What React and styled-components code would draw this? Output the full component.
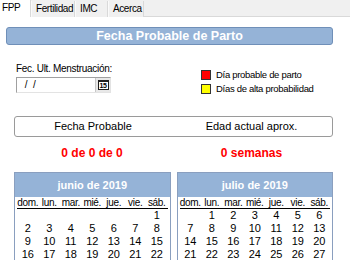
import React from 'react';
import styled, { createGlobalStyle } from 'styled-components';

const GlobalStyle = createGlobalStyle`
  html, body {
    margin: 0;
    padding: 0;
    background: #ffffff;
    font-family: "Liberation Sans", Arial, sans-serif;
    color: #000;
  }
`;

const Page = styled.div`
  width: 350px;
  height: 260px;
  overflow: hidden;
  background: #ffffff;
`;

const TabStrip = styled.div`
  display: flex;
  height: 17px;
  background: #f0f0f0;
  border-bottom: 1px solid #d9d9d9;
  box-sizing: border-box;
`;

const Tab = styled.div`
  box-sizing: border-box;
  width: ${p => p.$w}px;
  height: ${p => (p.$active ? 17 : 16)}px;
  margin-top: ${p => (p.$active ? 0 : 1)}px;
  padding-left: ${p => (p.$active ? 2 : 4)}px;
  font-size: 10px;
  letter-spacing: -0.4px;
  line-height: 15px;
  white-space: nowrap;
  overflow: hidden;
  background: ${p => (p.$active ? '#ffffff' : '#f0f0f0')};
  border-right: 1px solid #d9d9d9;
  border-left: ${p => (p.$active ? 'none' : '1px solid #fafafa')};
`;

const Panel = styled.div`
  padding: 10px 17px 0 6px;
`;

const Banner = styled.div`
  height: 18px;
  box-sizing: border-box;
  background: #95b3d7;
  border: 1px solid #6f8fb8;
  border-radius: 3px;
  color: #ffffff;
  font-weight: bold;
  font-size: 12.5px;
  line-height: 16px;
  text-align: center;
`;

const FormRow = styled.div`
  display: flex;
  margin-top: 17px;
  padding-left: 10px;
  height: 50px;
`;

const DateCol = styled.div`
  width: 185px;
  display: flex;
  flex-direction: column;
`;

const Label = styled.div`
  font-size: 10px;
  line-height: 13px;
  letter-spacing: -0.3px;
`;

const DateBox = styled.div`
  margin-top: 2px;
  width: 95px;
  height: 16px;
  box-sizing: border-box;
  display: flex;
  border: 1px solid #a0a0a0;
  border-right-color: #e3e3e3;
  border-bottom-color: #e3e3e3;
  background: #fff;
`;

const DateText = styled.div`
  flex: 1;
  font-size: 10px;
  line-height: 14px;
  padding-left: 5px;
  white-space: pre;
`;

const CalBtn = styled.div`
  width: 15px;
  height: 14px;
  box-sizing: border-box;
  background: #e8e8e8;
  border-left: 1px solid #c8c8c8;
  display: flex;
  align-items: center;
  justify-content: center;
`;

const CalGlyph = styled.span`
  display: block;
  width: 11px;
  height: 10px;
  box-sizing: border-box;
  border: 1px solid #202020;
  border-top-width: 2px;
  font-size: 7px;
  line-height: 7px;
  font-weight: bold;
  text-align: center;
  letter-spacing: -0.5px;
  background: #fff;
`;

const Legend = styled.div`
  display: flex;
  flex-direction: column;
  gap: 4px;
  padding-top: 8px;
`;

const LegendItem = styled.div`
  display: flex;
  align-items: center;
  gap: 5px;
  font-size: 9.5px;
  line-height: 10px;
  letter-spacing: -0.3px;
`;

const Swatch = styled.span`
  width: 8px;
  height: 8px;
  border: 1px solid #333;
  background: ${p => p.$color};
`;

const ResultBox = styled.div`
  margin: 4px 0 0 8px;
  height: 21px;
  box-sizing: border-box;
  border: 1px solid #9a9a9a;
  border-radius: 3px;
  display: grid;
  grid-template-columns: 156px 1fr;
  font-size: 11px;
  line-height: 19px;
  text-align: center;
`;

const ResultRow = styled.div`
  margin-left: 8px;
  display: grid;
  grid-template-columns: 156px 1fr;
  color: #ff0000;
  font-weight: bold;
  font-size: 12px;
  line-height: 14px;
  padding-top: 9px;
  text-align: center;
`;

const Calendars = styled.div`
  margin: 12px 0 0 8px;
  display: flex;
  gap: 6px;
`;

const Calendar = styled.div`
  width: 157px;
  box-sizing: border-box;
  border: 1px solid #8a9fbf;
  border-bottom: none;
  height: 100px;
`;

const CalHead = styled.div`
  height: 24px;
  background: #95b3d7;
  color: #ffffff;
  font-weight: bold;
  font-size: 11px;
  line-height: 24px;
  text-align: center;
`;

const Grid = styled.div`
  display: grid;
  grid-template-columns: repeat(7, 1fr);
  padding: 0 2px;
  font-size: 11px;
  line-height: 13px;
  text-align: center;
`;

const DayName = styled.div`
  font-size: 10px;
  letter-spacing: -0.3px;
  line-height: 10px;
  padding: 1px 0 0;
  border-bottom: 1px solid #000;
`;

const Cell = styled.div`
  height: 13px;
`;

const names = ['dom.', 'lun.', 'mar.', 'mié.', 'jue.', 'vie.', 'sáb.'];

function Month({ title, offset }) {
  const cells = [];
  for (let i = 0; i < offset; i++) cells.push('');
  for (let d = 1; d <= 31 && cells.length < 35; d++) cells.push(d);
  return (
    <Calendar>
      <CalHead>{title}</CalHead>
      <Grid>
        {names.map(n => <DayName key={n}>{n}</DayName>)}
        {cells.map((c, i) => <Cell key={i}>{c}</Cell>)}
      </Grid>
    </Calendar>
  );
}

export default function App() {
  return (
    <Page>
      <GlobalStyle />
      <TabStrip>
        <Tab $active $w={31}>FPP</Tab>
        <Tab $w={44}>Fertilidad</Tab>
        <Tab $w={33}>IMC</Tab>
        <Tab $w={36}>Acerca</Tab>
      </TabStrip>
      <Panel>
        <Banner>Fecha Probable de Parto</Banner>
        <FormRow>
          <DateCol>
            <Label>Fec. Ult. Menstruación:</Label>
            <DateBox>
              <DateText>{' /  /'}</DateText>
              <CalBtn><CalGlyph>15</CalGlyph></CalBtn>
            </DateBox>
          </DateCol>
          <Legend>
            <LegendItem><Swatch $color="#ff0000" />Día probable de parto</LegendItem>
            <LegendItem><Swatch $color="#ffff00" />Días de alta probabilidad</LegendItem>
          </Legend>
        </FormRow>
        <ResultBox>
          <div>Fecha Probable</div>
          <div>Edad actual aprox.</div>
        </ResultBox>
        <ResultRow>
          <div>0 de 0 de 0</div>
          <div>0 semanas</div>
        </ResultRow>
        <Calendars>
          <Month title="junio de 2019" offset={6} />
          <Month title="julio de 2019" offset={1} />
        </Calendars>
      </Panel>
    </Page>
  );
}
